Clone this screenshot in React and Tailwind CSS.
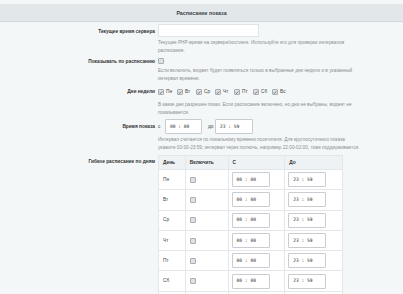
import { useState } from 'react';

const days = ['Пн', 'Вт', 'Ср', 'Чт', 'Пт', 'Сб', 'Вс'];

const Box = ({ checked }) => (
    <span className='flex items-center justify-center w-[6px] h-[6px] rounded-[1px] border border-[#a9adb1] bg-[#dfe2e5] shrink-0'>
        {checked && (
            <svg viewBox="0 0 6 6" className='w-[5px] h-[5px]'>
                <path d="M1 3 L2.4 4.4 L5 1.4" fill="none" stroke="#444" strokeWidth="1" />
            </svg>
        )}
    </span>
);

const TimeInput = ({ value, w = 'w-[38px]' }) => (
    <div className={`${w} h-[15px] bg-white border border-[#c9cdd1] rounded-[1px] flex items-center pl-[4px] text-[4.6px] text-[#333] font-['DejaVu_Sans_Mono',monospace]`}>
        {value}
    </div>
);

const Label = ({ children, className = '' }) => (
    <div className={`w-[157px] shrink-0 text-right font-bold text-[4.8px] leading-[6px] text-[#333] pr-[2px] ${className}`}>{children}</div>
);

const Help = ({ children, className = '' }) => (
    <div className={`ml-[158px] w-[230px] whitespace-nowrap text-[4.7px] leading-[7.5px] text-[#8a8e92] ${className}`}>{children}</div>
);

export default function App() {
    const [show] = useState(false);

    return (
        <div className="w-[403px] h-[294px] overflow-hidden bg-[#f4f7f8] leading-[6px] font-['Liberation_Sans',Arial,sans-serif]">
            <div className='h-[4px]'></div>
            <div className='h-[18px] bg-[#e2e8ea] border-b border-[#d3dadd] flex items-center justify-center text-[5.3px] font-semibold text-[#3c4246]'>
                Расписание показа
            </div>

            <div className='flex mt-[2px]'>
                <Label className='pt-[5px]'>Текущее время сервера</Label>
                <div className='ml-[1px] w-[101px] h-[13px] bg-white border border-[#e1e5e8]'></div>
            </div>
            <Help className='mt-[2px]'>
                Текущее PHP-время на сервере/хостинге. Используйте его для проверки интервалов<br />расписания.
            </Help>

            <div className='flex mt-[4px]'>
                <Label className='pt-[1px]'>Показывать по расписанию</Label>
                <div className='ml-[1px]'><Box checked={show} /></div>
            </div>
            <Help className='mt-[2px]'>
                Если включить, виджет будет появляться только в выбранные дни недели и в указанный<br />интервал времени.
            </Help>

            <div className='flex items-center mt-[6px] h-[8px]'>
                <Label>Дни недели</Label>
                <div className='flex items-center gap-[5px] ml-[1px]'>
                    {days.map((d) => (
                        <div key={d} className='flex items-center gap-[2px] w-[14px] text-[4.8px] text-[#444]'>
                            <Box checked />
                            {d}
                        </div>
                    ))}
                </div>
            </div>
            <Help className='mt-[5px]'>
                В какие дни разрешен показ. Если расписание включено, но дни не выбраны, виджет не<br />показывается.
            </Help>

            <div className='flex items-center mt-[3px]'>
                <Label>Время показа</Label>
                <div className='flex items-center text-[4.8px] text-[#444]'>
                    <span className='ml-[1px] w-[7px]'>с</span>
                    <TimeInput value="00 : 00" w='w-[37px]' />
                    <span className='ml-[6px] w-[7px]'>до</span>
                    <TimeInput value="23 : 59" w='w-[38px]' />
                </div>
            </div>
            <Help className='mt-[2px]'>
                Интервал считается по локальному времени посетителя. Для круглосуточного показа<br />укажите 00:00-23:59; интервал через полночь, например 22:00-02:00, тоже поддерживается.
            </Help>

            <div className='flex mt-[4px]'>
                <Label className='pt-[4px]'>Гибкое расписание по дням</Label>
                <table className='ml-[1px] w-[185px] border-collapse bg-white text-[4.8px] leading-[6px] text-[#444]'>
                    <thead>
                        <tr className='h-[14px] bg-[#eef2f4] text-[#333] text-left'>
                            <th className='w-[27px] border border-[#e3e7ea] pl-[4px] font-bold'>День</th>
                            <th className='w-[43px] border border-[#e3e7ea] pl-[4px] font-bold'>Включить</th>
                            <th className='w-[57px] border border-[#e3e7ea] pl-[4px] font-bold'>С</th>
                            <th className='w-[58px] border border-[#e3e7ea] pl-[4px] font-bold'>До</th>
                        </tr>
                    </thead>
                    <tbody>
                        {days.map((d) => (
                            <tr key={d} className='h-[20.3px]'>
                                <td className='border border-[#e3e7ea] pl-[4px]'>{d}</td>
                                <td className='border border-[#e3e7ea] pl-[4px]'><Box /></td>
                                <td className='border border-[#e3e7ea] pl-[3px]'><TimeInput value="00 : 00" /></td>
                                <td className='border border-[#e3e7ea] pl-[3px]'><TimeInput value="23 : 59" /></td>
                            </tr>
                        ))}
                    </tbody>
                </table>
            </div>
        </div>
    );
}
